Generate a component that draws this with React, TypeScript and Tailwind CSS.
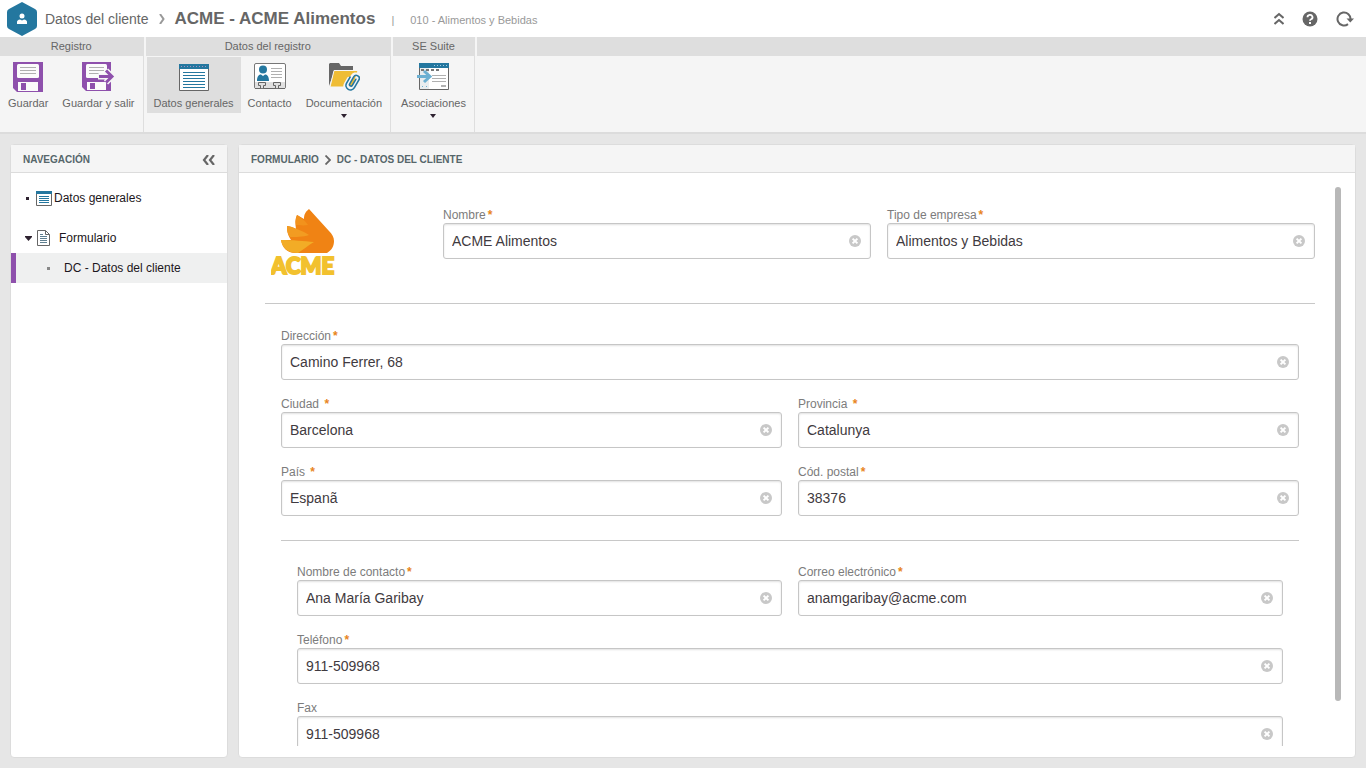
import React from 'react';

type FieldProps = {
  id: string;
  label: string;
  value: string;
  required?: boolean;
  className?: string;
};

function ClearIcon() {
  return (
    <svg viewBox="0 0 12 12" className="h-3 w-3" aria-hidden="true">
      <circle cx="6" cy="6" r="6" fill="#c8c8c8" />
      <path d="M3.6 3.6l4.8 4.8M8.4 3.6L3.6 8.4" stroke="#fff" strokeWidth="2" />
    </svg>
  );
}

function Field({ id, label, value, required = true, className = '' }: FieldProps) {
  return (
    <div className={className}>
      <label htmlFor={id} className="block text-xs text-[#7c7c7c]">
        {label}
        {required && <span className="pl-0.5 font-bold text-[#e8851c]">*</span>}
      </label>
      <div className="flex h-9 items-center rounded-[3px] border border-[#c6c6c6] bg-white pr-[9px] shadow-[inset_0_1px_2px_rgba(0,0,0,0.12)]">
        <input
          id={id}
          type="text"
          defaultValue={value}
          className="min-w-0 flex-1 bg-transparent px-2 text-sm text-[#3f3a40] outline-none"
        />
        <button type="button" aria-label={`Limpiar ${label}`}>
          <ClearIcon />
        </button>
      </div>
    </div>
  );
}

function SaveIcon() {
  return (
    <svg viewBox="0 0 30 30" className="h-[30px] w-[30px]" aria-hidden="true">
      <path d="M0 0h30v30H4l-4-4z" fill="#8e50ac" />
      <rect x="4" y="2" width="22" height="14" rx="1.5" fill="#fbfbfb" />
      <path d="M7 5.500h16M7 8.500h16M7 11.500h16" stroke="#b0b0b0" />
      <path d="M5 20h20v9H5z" fill="#fbfbfb" />
      <path d="M8 21h5v7H8z" fill="#8e50ac" />
    </svg>
  );
}

function SaveExitIcon() {
  return (
    <svg viewBox="0 0 33 30" className="h-[30px] w-[33px]" aria-hidden="true">
      <path d="M0 0h29v29H4l-4-4z" fill="#8e50ac" />
      <rect x="4" y="2" width="21" height="14" rx="1.5" fill="#fbfbfb" />
      <path d="M7 5.500h15M7 8.500h15M7 11.500h10" stroke="#b0b0b0" />
      <path d="M5 20h19v8H5z" fill="#fbfbfb" />
      <path d="M8 21h5v6H8z" fill="#8e50ac" />
      <path d="M16 14.500h13M24 8.500l6 6-6 6" fill="none" stroke="#f5f5f5" strokeWidth="6" />
      <path d="M17 14.500h12M24 8.500l6 6-6 6" fill="none" stroke="#8e50ac" strokeWidth="3" />
    </svg>
  );
}

function FormIcon() {
  return (
    <svg viewBox="0 0 30 30" className="h-[30px] w-[30px]" aria-hidden="true">
      <path d="M.5 2.500h29v26H.5z" fill="#fff" stroke="#666" />
      <path d="M0 2h30v5H0z" fill="#24779f" />
      <path d="M2 4.500h26" stroke="#a58fc0" strokeDasharray="1 2" />
      <path
        d="M4 10.500h22M4 13.500h22M4 16.500h22M4 19.500h22M4 22.500h22M4 25.500h22"
        stroke="#24779f"
      />
    </svg>
  );
}

function ContactIcon() {
  return (
    <svg viewBox="0 0 32 30" className="h-[30px] w-8" aria-hidden="true">
      <rect x=".5" y="1.500" width="31" height="25" rx="1.500" fill="#fff" stroke="#777" />
      <path d="M1 20h30v6H1z" fill="#e0e0e0" />
      <path
        d="M1 26.500h5.500v-3h-2v-3h7v3h-2v3h12v-3h-2v-3h7v3h-2v3H31"
        fill="none"
        stroke="#666"
      />
      <circle cx="9" cy="7.500" r="4" fill="#24779f" />
      <path d="M3 19c0-5 2-6.500 4-6.500l2 1.500 2-1.500c2 0 4 1.500 4 6.500z" fill="#24779f" />
      <path d="M17 6.500h11M17 9.500h11M17 12.500h11M17 15.500h11" stroke="#b0b0b0" />
    </svg>
  );
}

function DocumentsIcon() {
  return (
    <svg viewBox="0 0 32 30" className="h-[30px] w-8" aria-hidden="true">
      <path d="M1 24V2l1-1h9l2 3h12v6H6z" fill="#666" />
      <path d="M6 8.500h24L25 25H2z" fill="#efbd35" stroke="#f5f5f5" />
      <g fill="none" strokeLinecap="round" transform="rotate(30 24.500 20)">
        <path
          d="M27.500 16v8a3 3 0 0 1-6 0v-9a4 4 0 0 1 8 0v10a5 5 0 0 1-10 0v-6"
          stroke="#f5f5f5"
          strokeWidth="3.500"
        />
        <path
          d="M26 16v7a1.500 1.500 0 0 1-3 0v-8a3 3 0 0 1 6 0v9a4.500 4.500 0 0 1-9 0v-7"
          stroke="#24779f"
          strokeWidth="1.600"
        />
      </g>
    </svg>
  );
}

function AssociationsIcon() {
  return (
    <svg viewBox="0 0 32 30" className="h-[30px] w-8" aria-hidden="true">
      <path d="M2.500 1.500h29v26h-29z" fill="#fff" stroke="#666" />
      <path d="M3 6h9v21H3z" fill="#e9edef" />
      <path d="M2 1h30v5H2z" fill="#24779f" />
      <path d="M17 3.500h13" stroke="#a5cbe0" strokeDasharray="1 2" />
      <path d="M4 8h18" stroke="#777" strokeWidth="2" strokeDasharray="3 2" />
      <path d="M15 13.500h14M15 16.500h14M15 19.500h14" stroke="#b0b0b0" />
      <path d="M24 24h5" stroke="#b0b0b0" strokeWidth="2" />
      <path d="M5 24.500h6" stroke="#6cb0d2" strokeDasharray="1 3" />
      <path d="M0 14.500h12M7 9l6 5.500L7 20" fill="none" stroke="#6cb0d2" strokeWidth="3" />
    </svg>
  );
}

function AcmeLogo() {
  return (
    <svg viewBox="0 0 66 70" className="h-[70px] w-[66px]" role="img" aria-label="ACME">
      <path
        d="M38 0C34 3 33 6 33 10C30 8 28 7 26 6C24 10 24 14 25 20C22 18 18 17 16 17C16 20 16 25 20 31H10C11 38 16 44 24 44H56C61 41 63 37 63 32C63 28 61 25 58 22z"
        fill="#f08314"
      />
      <path d="M10 31C20 31 34 32 43 33C36 37 32 41 27 44C16 44 11 38 10 31z" fill="#f2ac26" />
      <path d="M16 17C22 18 32 22 38 26C32 28 24 28 19 28C16 24 16 21 16 17z" fill="#f29c22" />
      <path d="M26 6C31 9 35 13 37 16C32 17 28 16 25 16C24 12 25 9 26 6z" fill="#f2921c" />
      <text
        x="0"
        y="65"
        fill="#f2c12e"
        stroke="#f2c12e"
        strokeWidth="2"
        className="font-[Lato,sans-serif] text-[22px] font-black"
      >
        ACME
      </text>
    </svg>
  );
}

const groups = [
  {
    title: 'Registro',
    items: [
      { label: 'Guardar', icon: <SaveIcon /> },
      { label: 'Guardar y salir', icon: <SaveExitIcon /> },
    ],
  },
  {
    title: 'Datos del registro',
    items: [
      { label: 'Datos generales', icon: <FormIcon />, active: true },
      { label: 'Contacto', icon: <ContactIcon /> },
      { label: 'Documentación', icon: <DocumentsIcon />, menu: true },
    ],
  },
  {
    title: 'SE Suite',
    items: [{ label: 'Asociaciones', icon: <AssociationsIcon />, menu: true }],
  },
];

function TopBar() {
  return (
    <header className="flex h-[37px] shrink-0 items-center bg-white pr-3 pl-[7px] text-[#666]">
      <svg viewBox="0 0 30 34" className="h-[34px] w-[30px]" aria-hidden="true">
        <path d="M15 0l13 7q2 1 2 3v14q0 2-2 3l-13 7-13-7q-2-1-2-3V10q0-2 2-3z" fill="#24779f" />
        <circle cx="15" cy="14" r="2.500" fill="#fff" />
        <path d="M10 22v-2q0-2 3-2.500l2 1 2-1q3 .5 3 2.500v2z" fill="#fff" />
      </svg>
      <a href="#" className="ml-2 text-sm">
        Datos del cliente
      </a>
      <svg viewBox="0 0 6 10" className="mx-2.5 h-2.5 w-1.5" aria-hidden="true">
        <path d="M1 0l3.500 5L1 10" fill="none" stroke="#999" strokeWidth="2" />
      </svg>
      <div className="flex items-baseline gap-4 text-[11px] text-[#999]">
        <h1 className="text-[17px] font-bold text-[#666]">ACME - ACME Alimentos</h1>
        <span>|</span>
        <span>010 - Alimentos y Bebidas</span>
      </div>
      <div className="ml-auto flex items-center gap-[18px]">
        <button type="button" aria-label="Contraer">
          <svg viewBox="0 0 10 13" className="h-[13px] w-2.5">
            <path d="M.5 6L5 2l4.500 4M.5 12L5 8l4.500 4" fill="none" stroke="#666" strokeWidth="2" />
          </svg>
        </button>
        <button type="button" aria-label="Ayuda">
          <svg viewBox="0 0 16 16" className="h-4 w-4">
            <circle cx="8" cy="8" r="7.500" fill="#666" />
            <path
              d="M5.500 6.200a2.500 2.300 0 1 1 3.600 2q-1.100.6-1.100 1.600"
              fill="none"
              stroke="#fff"
              strokeWidth="1.800"
            />
            <path d="M7 11h2v2H7z" fill="#fff" />
          </svg>
        </button>
        <button type="button" aria-label="Actualizar">
          <svg viewBox="0 0 18 16" className="h-4 w-[18px]">
            <path d="M14.500 8.500A6.500 6.500 0 1 0 12 13.100" fill="none" stroke="#666" strokeWidth="2" />
            <path d="M10.500 7.500H18l-3.700 4z" fill="#666" />
          </svg>
        </button>
      </div>
    </header>
  );
}

function Ribbon() {
  return (
    <div className="flex h-[97px] shrink-0 gap-0.5 border-b-2 border-[#dcdcdc] bg-[#f5f5f5] text-[11px] text-[#666]">
      {groups.map((group) => (
        <section key={group.title} className="flex flex-col border-r border-[#dedede]">
          <h2 className="h-[19px] bg-[#dedede] text-center leading-[19px]">{group.title}</h2>
          <div className="flex items-start px-px pt-px">
            {group.items.map((item) => (
              <button
                key={item.label}
                type="button"
                className={`flex flex-col items-center px-[7px] pt-[5px] ${
                  item.active ? 'bg-[#dedede]' : ''
                }`}
              >
                {item.icon}
                <span className="mt-[3px] h-[18px] leading-4 whitespace-nowrap">{item.label}</span>
                {item.menu && (
                  <svg viewBox="0 0 6 4" className="mt-px h-1 w-1.5" aria-hidden="true">
                    <path d="M0 0h6L3 4z" fill="#2e2230" />
                  </svg>
                )}
              </button>
            ))}
          </div>
        </section>
      ))}
      <div className="h-[19px] flex-1 bg-[#dedede]" />
    </div>
  );
}

function Sidebar() {
  return (
    <aside className="flex w-[218px] shrink-0 flex-col rounded-sm border border-[#dcdcdc] bg-white">
      <div className="flex h-7 items-center justify-between border-b border-[#dcdcdc] bg-[#f5f5f5] pt-0.5 pr-3 pl-3 text-[#56666a]">
        <h2 className="text-[10px] font-bold">NAVEGACIÓN</h2>
        <button type="button" aria-label="Ocultar navegación">
          <svg viewBox="0 0 13 10" className="h-2.5 w-[13px]">
            <path d="M6 0L2 5l4 5M12 0L8 5l4 5" fill="none" stroke="#666" strokeWidth="2.200" />
          </svg>
        </button>
      </div>
      <nav className="flex flex-col pt-2.5 text-xs text-[#1c1620]">
        <a href="#" className="flex h-[30px] items-center pl-[15px]">
          <span className="h-[3px] w-[3px] bg-[#2e2230]" />
          <svg viewBox="0 0 16 15" className="ml-[7px] h-[15px] w-4" aria-hidden="true">
            <path d="M.5.5h15v14H.5z" fill="#fff" stroke="#666" />
            <path d="M0 0h16v3H0z" fill="#24779f" />
            <path d="M3 5.500h10M3 7.500h10M3 9.500h10M3 11.500h10" stroke="#24779f" />
          </svg>
          <span className="ml-0.5">Datos generales</span>
        </a>
        <a href="#" className="mt-2.5 flex h-[30px] items-center pl-3.5">
          <svg viewBox="0 0 7 5" className="h-[5px] w-[7px]" aria-hidden="true">
            <path d="M0 0h7v1L3.500 5 0 1z" fill="#2e2230" />
          </svg>
          <svg viewBox="0 0 13 16" className="ml-[5px] h-4 w-[13px]" aria-hidden="true">
            <path d="M.5.5h8l4 4v11H.5z" fill="#fff" stroke="#666" />
            <path d="M8.500.5v4h4" fill="none" stroke="#666" />
            <path d="M3 4.500h3M3 6.500h7M3 8.500h7M3 10.500h7M3 12.500h7" stroke="#5f7f90" />
          </svg>
          <span className="ml-[9px]">Formulario</span>
        </a>
        <a
          href="#"
          aria-current="page"
          className="flex h-[30px] items-center border-l-[5px] border-[#8e50ac] bg-[#eff0f0] pl-[31px]"
        >
          <span className="h-[3px] w-[3px] bg-[#888]" />
          <span className="ml-3.5">DC - Datos del cliente</span>
        </a>
      </nav>
    </aside>
  );
}

function FormPanel() {
  return (
    <main className="flex min-w-0 flex-1 flex-col rounded-sm border border-[#dcdcdc] bg-white">
      <div className="flex h-7 shrink-0 items-center border-b border-[#dcdcdc] bg-[#f5f5f5] pt-0.5 pl-3 text-[10px] font-bold text-[#56666a]">
        <a href="#">FORMULARIO</a>
        <svg viewBox="0 0 6 10" className="mx-1.5 h-2.5 w-1.5" aria-hidden="true">
          <path d="M.5.5L5 5 .5 9.500" fill="none" stroke="#666" strokeWidth="1.800" />
        </svg>
        <span>DC - DATOS DEL CLIENTE</span>
      </div>
      <div className="flex min-h-0 flex-1 gap-5 pt-3.5 pr-3.5 pb-[11px] pl-[26px]">
        <form className="min-w-0 flex-1 overflow-y-auto pt-5 [scrollbar-width:none]">
          <div className="flex gap-4 border-b border-[#c8c8c8] pb-6">
            <div className="w-[162px] shrink-0 pt-0.5 pl-1.5">
              <AcmeLogo />
            </div>
            <Field id="nombre" label="Nombre" value="ACME Alimentos" className="flex-1" />
            <Field id="tipo" label="Tipo de empresa" value="Alimentos y Bebidas" className="flex-1" />
          </div>
          <div className="px-4 pt-6">
            <div className="grid grid-cols-2 gap-4 border-b border-[#c8c8c8] pb-6">
              <Field id="direccion" label="Dirección" value="Camino Ferrer, 68" className="col-span-2" />
              <Field id="ciudad" label="Ciudad " value="Barcelona" />
              <Field id="provincia" label="Provincia " value="Catalunya" />
              <Field id="pais" label="País " value="Espanã" />
              <Field id="postal" label="Cód. postal" value="38376" />
            </div>
            <div className="grid grid-cols-2 gap-4 px-4 pt-[23px] pb-4">
              <Field id="contacto" label="Nombre de contacto" value="Ana María Garibay" />
              <Field id="correo" label="Correo electrónico" value="anamgaribay@acme.com" />
              <Field id="telefono" label="Teléfono" value="911-509968" className="col-span-2" />
              <Field id="fax" label="Fax" value="911-509968" required={false} className="col-span-2" />
            </div>
          </div>
        </form>
        <div className="w-1.5">
          <div className="h-[92%] rounded-full bg-[#b8b8b8]" />
        </div>
      </div>
    </main>
  );
}

export default function App() {
  return (
    <div className="flex h-screen flex-col bg-[#e6e6e6] font-['Liberation_Sans',Arial,sans-serif]">
      <TopBar />
      <Ribbon />
      <div className="flex min-h-0 flex-1 gap-2.5 p-2.5">
        <Sidebar />
        <FormPanel />
      </div>
    </div>
  );
}
